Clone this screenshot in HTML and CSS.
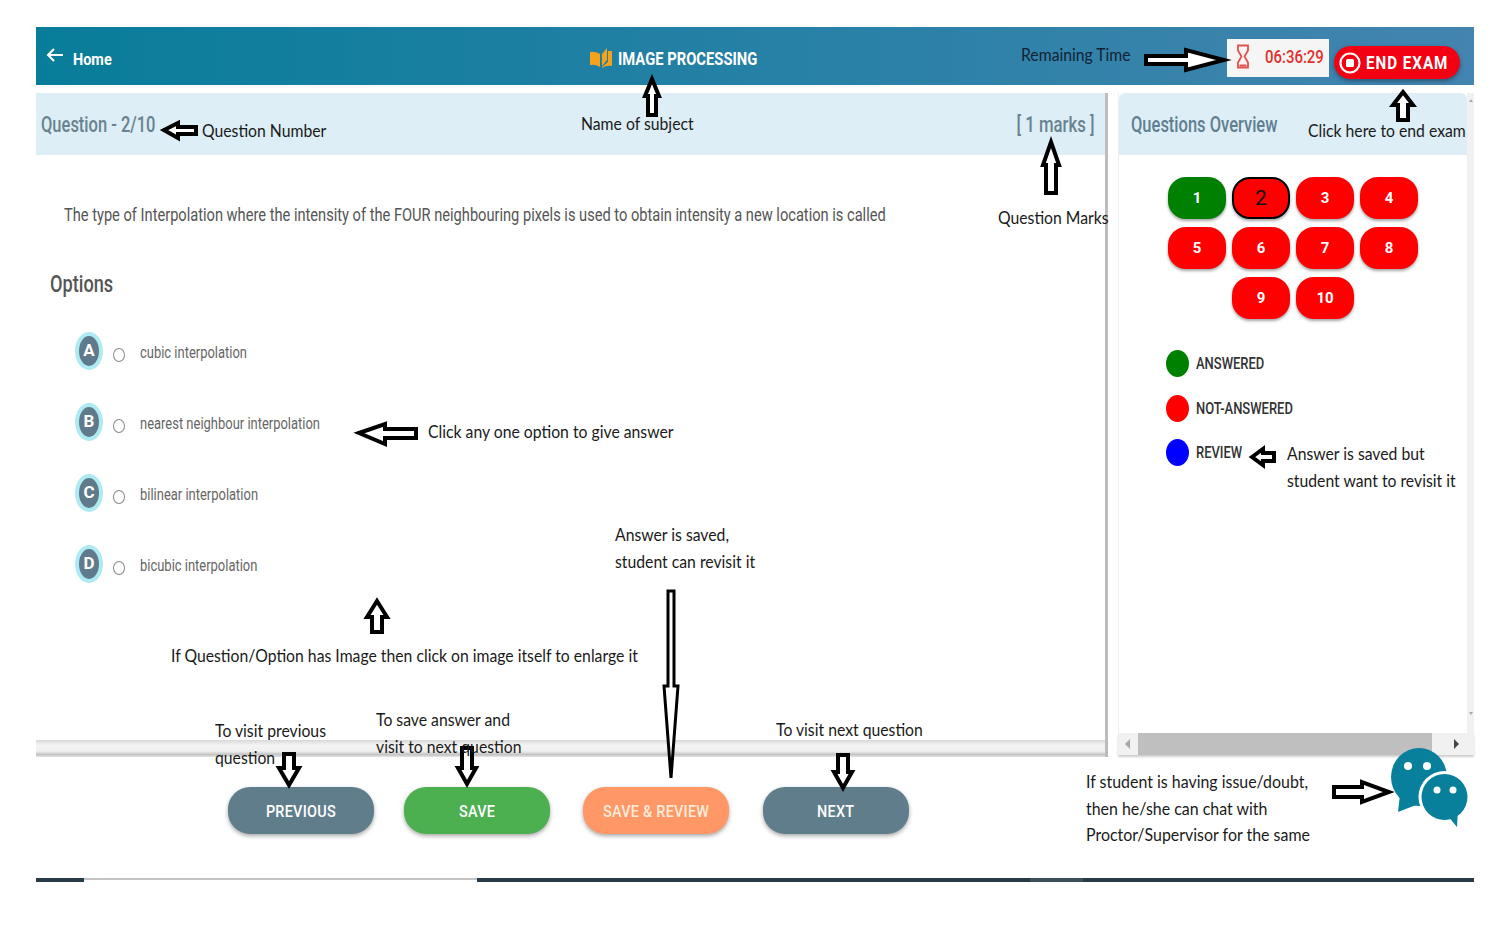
FILE: index.html
```html
<!DOCTYPE html>
<html lang="en">
<head>
    <meta charset="UTF-8">
    <meta name="viewport" content="width=device-width, initial-scale=1.0">
    <title>Online Exam Instructions</title>
    <link rel="stylesheet" href="styles.css">
</head>
<body>
    <div class="exam">
        <header class="topbar">
            <a class="home" href="#">
                <svg width="18" height="14" viewBox="0 0 18 14"><path d="M17 7H2M8 1 2 7l6 6" fill="none" stroke="#fff" stroke-width="2"/></svg>
                <span>Home</span>
            </a>
            <div class="subject">
                <svg width="22" height="22" viewBox="0 0 22 22"><path d="M0 5q5-1 10 2v13q-5-3-10-2zM12 7l5-6v12l-5 6z" fill="#f7a21b"/><path d="M18 4h4v15q-6-1-10 2v-1l6-5z" fill="#f7a21b"/></svg>
                <span>IMAGE PROCESSING</span>
            </div>
            <div class="timer">
                <svg width="14" height="25" viewBox="0 0 14 25"><path d="M2 1.500h10v5L8.500 12.500 12 18.500v5H2v-5l3.500-6L2 6.500z" fill="none" stroke="#e2514c" stroke-width="1.800"/><path d="M3.500 20.500h7v2h-7z" fill="#e2514c"/></svg>
                <span>06:36:29</span>
            </div>
            <button class="end-exam">
                <svg width="24" height="24" viewBox="0 0 24 24"><circle cx="12" cy="12" r="9.500" fill="none" stroke="#fff" stroke-width="2.200"/><rect x="8" y="8" width="8" height="8" rx="1.500" fill="#fff"/></svg>
                <span>END EXAM</span>
            </button>
        </header>

        <div class="panes">
            <section class="question-pane">
                <div class="q-head">
                    <span class="q-number">Question - 2/10</span>
                    <span class="q-marks">[ 1 marks ]</span>
                </div>
                <p class="q-text">The type of Interpolation where the intensity of the FOUR neighbouring pixels is used to obtain intensity a new location is called</p>
                <h3 class="options-title">Options</h3>
                <div class="options">
                    <label class="option"><span class="badge">A</span><span class="radio"></span><span class="option-text">cubic interpolation</span></label>
                    <label class="option"><span class="badge">B</span><span class="radio"></span><span class="option-text">nearest neighbour interpolation</span></label>
                    <label class="option"><span class="badge">C</span><span class="radio"></span><span class="option-text">bilinear interpolation</span></label>
                    <label class="option"><span class="badge">D</span><span class="radio"></span><span class="option-text">bicubic interpolation</span></label>
                </div>
                <div class="pane-bar"></div>
            </section>

            <aside class="overview">
                <div class="overview-body">
                    <div class="overview-main">
                        <div class="overview-head"><span>Questions Overview</span></div>
                        <div class="numbers">
                            <button class="num answered">1</button>
                            <button class="num current">2</button>
                            <button class="num">3</button>
                            <button class="num">4</button>
                            <button class="num">5</button>
                            <button class="num">6</button>
                            <button class="num">7</button>
                            <button class="num">8</button>
                            <button class="num">9</button>
                            <button class="num">10</button>
                        </div>
                        <ul class="legend">
                            <li><span class="dot green"></span><span class="legend-text">ANSWERED</span></li>
                            <li><span class="dot red"></span><span class="legend-text">NOT-ANSWERED</span></li>
                            <li><span class="dot blue"></span><span class="legend-text">REVIEW</span></li>
                        </ul>
                    </div>
                    <div class="v-scroll">
                        <span class="tri-up"></span>
                        <span class="tri-down"></span>
                    </div>
                </div>
                <div class="h-scroll">
                    <span class="tri tri-left"></span>
                    <span class="thumb"></span>
                    <span class="tri tri-right"></span>
                </div>
            </aside>
        </div>

        <div class="actions">
            <button class="action slate"><span>PREVIOUS</span></button>
            <button class="action green-btn"><span>SAVE</span></button>
            <button class="action orange"><span>SAVE &amp; REVIEW</span></button>
            <button class="action slate"><span>NEXT</span></button>
        </div>

        <div class="progress">
            <span class="seg-dark seg-start"></span>
            <span class="seg-light"></span>
            <span class="seg-dark seg-mid"></span>
            <span class="seg-soft"></span>
            <span class="seg-dark seg-end"></span>
        </div>
    </div>

    <!-- annotations drawn over the screenshot -->
    <svg class="arrows" width="1501" height="928" viewBox="0 0 1501 928">
        <g fill="#fff" stroke="#000" stroke-width="4">
            <path d="M652 79l7 17h-3v19h-8V96h-3z"/>
            <path d="M164 130l14-7v4h18v7h-18v4z"/>
            <path d="M1146 56h40v-6l38 10-38 10v-6h-40z"/>
            <path d="M1403 92l10 13h-5v15h-10v-15h-5z"/>
            <path d="M1051 142l8 23h-3v28h-10v-28h-3z"/>
            <path d="M359 433l26-9v5h31v9h-31v6z"/>
            <path d="M1252 457l11-8v4h11v8h-11v4z"/>
            <path d="M377 601l10 16h-5v15h-10v-15h-5z"/>
            <path d="M284 754h10v14h5l-10 17-10-17h5z"/>
            <path d="M462 748h10v20h4l-9 16-9-16h4z"/>
            <path d="M838 755h10v17h4l-9 16-9-16h4z"/>
            <path d="M1334 787h28v-5l27 10-27 10v-5h-28z"/>
        </g>
        <path d="M668 591h6v95h4l-7 92-7-92h4z" fill="#fff" stroke="#000" stroke-width="3"/>
        <g fill="#08809c">
            <ellipse cx="1419" cy="777" rx="28" ry="29"/>
            <path d="M1400 795l-2 17 18-7z"/>
            <circle cx="1444.500" cy="797" r="26" fill="#fff"/>
            <circle cx="1444.500" cy="797" r="23"/>
            <path d="M1447 815l10 12 1-18z"/>
        </g>
        <g fill="#fff">
            <circle cx="1408" cy="766" r="4"/>
            <circle cx="1427" cy="766" r="4"/>
            <circle cx="1437" cy="790" r="3.500"/>
            <circle cx="1453" cy="790" r="3.500"/>
        </g>
    </svg>

    <p class="note note-number">Question Number</p>
    <p class="note note-subject">Name of subject</p>
    <p class="note note-marks">Question Marks</p>
    <p class="note note-time">Remaining Time</p>
    <p class="note note-end">Click here to end exam</p>
    <p class="note note-click">Click any one option to give answer</p>
    <p class="note note-saved">Answer is saved,<br>student can revisit it</p>
    <p class="note note-image">If Question/Option has Image then click on image itself to enlarge it</p>
    <p class="note note-prev">To visit previous<br>question</p>
    <p class="note note-save">To save answer and<br>visit to next question</p>
    <p class="note note-next">To visit next question</p>
    <p class="note note-review">Answer is saved but<br>student want to revisit it</p>
    <p class="note note-chat">If student is having issue/doubt,<br>then he/she can chat with<br>Proctor/Supervisor for the same</p>
</body>
</html>
```

FILE: styles.css
```css
* {
    box-sizing: border-box;
}
body {
    margin: 0;
    position: relative;
    height: 928px;
    overflow: hidden;
    background: #fff;
    font-family: Roboto, "Liberation Sans", sans-serif;
}
button {
    font-family: inherit;
    border: none;
    cursor: pointer;
}
.exam {
    width: 1438px;
    margin-left: 36px;
    padding-top: 27px;
}

/* top bar */
.topbar {
    height: 58px;
    display: flex;
    align-items: center;
    background: linear-gradient(90deg, #087d9a, #4384b0);
    color: #fff;
}
.home {
    display: flex;
    align-items: center;
    gap: 9px;
    width: 554px;
    margin-top: 6px;
    padding-left: 10px;
    color: #fff;
    font-size: 17px;
    font-weight: 700;
    text-decoration: none;
}
.home svg {
    margin-top: -8px;
}
.home span {
    transform: scaleX(.85);
    transform-origin: left center;
}
.subject {
    display: flex;
    align-items: center;
    gap: 6px;
    width: 637px;
    margin-top: 4px;
    font-size: 18px;
    font-weight: 700;
}
.subject span {
    transform: scaleX(.82);
    transform-origin: left center;
    white-space: nowrap;
}
.timer {
    display: flex;
    align-items: center;
    gap: 15px;
    width: 102px;
    height: 38px;
    margin-top: 4px;
    padding-left: 9px;
    background: #f5f5f5;
    color: #e2302c;
    font-size: 18px;
    font-weight: 500;
}
.timer svg {
    flex: none;
    margin-top: -3px;
}
.timer span {
    transform: scaleX(.83);
    transform-origin: left center;
    margin-top: -3px;
}
.end-exam {
    display: flex;
    align-items: center;
    gap: 4px;
    width: 126px;
    height: 33px;
    margin: 13px 0 0 5px;
    padding: 0 0 0 4px;
    border-radius: 17px;
    background: #f30012;
    box-shadow: 0 2px 4px rgba(0, 0, 0, .35);
    color: #fff;
    font-size: 19px;
    font-weight: 700;
    letter-spacing: 1.2px;
}
.end-exam svg {
    flex: none;
}
.end-exam span {
    transform: scaleX(.8);
    transform-origin: left center;
    white-space: nowrap;
}

/* panes */
.panes {
    display: flex;
    gap: 10px;
    height: 664px;
    margin-top: 8px;
}
.question-pane {
    width: 1072px;
    display: flex;
    flex-direction: column;
    border-right: 3px solid #bdbdbd;
}
.q-head {
    height: 62px;
    display: flex;
    justify-content: space-between;
    align-items: center;
    padding: 0 11px 0 5px;
    background: #ddeef6;
    color: #68838f;
    font-size: 22px;
    font-weight: 500;
}
.q-number {
    transform: scaleX(.75);
    transform-origin: left center;
}
.q-marks {
    transform: scaleX(.76);
    transform-origin: right center;
}
.q-text {
    margin: 50px 0 0 28px;
    height: 20px;
    color: #555;
    font-size: 18px;
    line-height: 20px;
    white-space: nowrap;
    transform: scaleX(.813);
    transform-origin: left center;
}
.options-title {
    margin: 47px 0 0 14px;
    color: #555;
    font-size: 23px;
    font-weight: 500;
    line-height: 26px;
    transform: scaleX(.79);
    transform-origin: left center;
}
.options {
    display: flex;
    flex-direction: column;
    gap: 33px;
    margin: 34px 0 0 39px;
}
.option {
    display: flex;
    align-items: center;
    height: 38px;
    cursor: pointer;
}
.badge {
    width: 28px;
    height: 38px;
    display: flex;
    align-items: center;
    justify-content: center;
    border: 4px solid #aeeaf2;
    border-radius: 50%;
    background: #5f7a8a;
    color: #fff;
    font-size: 17px;
    font-weight: 700;
    padding-bottom: 2px;
}
.radio {
    width: 12px;
    height: 14px;
    margin: 8px 15px 0 10px;
    border: 1px solid #8a8a8a;
    border-radius: 50%;
}
.option-text {
    margin-top: 2px;
    color: #666;
    font-size: 16px;
    white-space: nowrap;
    transform: scaleX(.81);
    transform-origin: left center;
}
.pane-bar {
    height: 17px;
    margin-top: auto;
    background: linear-gradient(#d8d8d8, #f4f4f4 30%, #f0f0f0 65%, #c4c4c4 85%, #e4e4e4);
}

/* right side */
.overview {
    width: 356px;
    display: flex;
    flex-direction: column;
}
.overview-body {
    flex: 1;
    display: flex;
    background: #fff;
}
.overview-main {
    flex: 1;
    border-left: 1px solid #eee;
}
.overview-head {
    height: 62px;
    display: flex;
    align-items: center;
    padding-left: 12px;
    border-radius: 6px 6px 0 0;
    background: #ddeef6;
    color: #5f7f91;
    font-size: 22px;
    font-weight: 500;
}
.overview-head span {
    transform: scaleX(.75);
    transform-origin: left center;
    white-space: nowrap;
}
.v-scroll {
    width: 7px;
    display: flex;
    flex-direction: column;
    justify-content: space-between;
    padding: 6px 0 40px;
    background: #f1f1f1;
}
.tri-up, .tri-down {
    width: 0;
    height: 0;
    margin-left: 2px;
    border-left: 2px solid transparent;
    border-right: 2px solid transparent;
}
.tri-up { border-bottom: 3px solid #aaa; }
.tri-down { border-top: 3px solid #aaa; }
.numbers {
    width: 250px;
    display: flex;
    flex-wrap: wrap;
    justify-content: center;
    gap: 8px 6px;
    margin: 22px 0 0 49px;
}
.num {
    width: 58px;
    height: 42px;
    padding: 0;
    border-radius: 18px;
    background: #f00;
    box-shadow: 0 2px 3px rgba(0, 0, 0, .35);
    color: #fff;
    font-size: 15px;
    font-weight: 700;
}
.num.answered {
    background: #008000;
}
.num.current {
    border: 2px solid #000;
    color: #111;
    font-size: 21px;
    font-weight: 400;
}
.legend {
    list-style: none;
    margin: 31px 0 0 47px;
    padding: 0;
    display: flex;
    flex-direction: column;
    gap: 17.500px;
}
.legend li {
    display: flex;
    align-items: center;
    gap: 7px;
    color: #333;
    font-size: 16px;
    font-weight: 500;
}
.legend-text {
    transform: scaleX(.81);
    transform-origin: left center;
    white-space: nowrap;
}
.dot {
    width: 23px;
    height: 27px;
    border-radius: 50%;
}
.dot.green { background: #008000; }
.dot.red { background: #f00; }
.dot.blue { background: #00f; }
.h-scroll {
    height: 22px;
    display: flex;
    align-items: center;
    margin: -22px 0 2px;
    position: relative;
    background: #f1f1f1;
    box-shadow: 0 2px 2px rgba(0, 0, 0, .2);
}
.thumb {
    width: 294px;
    height: 22px;
    background: #bfbfbf;
}
.tri {
    width: 0;
    height: 0;
    border-top: 5px solid transparent;
    border-bottom: 5px solid transparent;
}
.tri-left {
    margin: 0 8px 0 7px;
    border-right: 5px solid #a5a5a5;
}
.tri-right {
    margin-left: 22px;
    border-left: 5px solid #444;
}

/* bottom buttons */
.actions {
    display: flex;
    gap: 33px;
    margin-top: 30px;
    padding-left: 192px;
}
.action {
    width: 146px;
    height: 47px;
    padding-top: 2px;
    border-radius: 22px;
    box-shadow: 0 2px 4px rgba(0, 0, 0, .35);
    color: #fff;
    font-size: 16px;
    font-weight: 500;
    letter-spacing: .3px;
}
.action span {
    display: inline-block;
    transform: scaleX(.9);
}
.slate { background: #607d8b; }
.green-btn { background: #4caf50; margin-left: -3px; }
.orange { background: #ff9866; color: #fdebd9; }
.orange + .slate { margin-left: 1px; }
.progress {
    display: flex;
    align-items: flex-start;
    height: 4px;
    margin-top: 44px;
}
.seg-dark {
    height: 4px;
    background: #263a47;
}
.seg-start { width: 48px; }
.seg-light { width: 393px; height: 2px; background: #c4c4c4; }
.seg-mid { width: 553px; }
.seg-soft { width: 53px; height: 4px; background: #3d4f5b; }
.seg-end { flex: 1; }

/* annotations */
.arrows {
    position: absolute;
    left: 0;
    top: 0;
    pointer-events: none;
}
.note {
    position: absolute;
    margin: 0;
    color: #1a1a1a;
    font-family: Lato, "Liberation Sans", sans-serif;
    font-size: 18px;
    line-height: 26.500px;
    white-space: nowrap;
    transform: scaleX(.875);
    transform-origin: left top;
}
.note-number { left: 202px; top: 117px; }
.note-subject { left: 581px; top: 110px; }
.note-marks { left: 998px; top: 204px; }
.note-time { left: 1021px; top: 41px; color: #123; }
.note-end { left: 1308px; top: 117px; }
.note-click { left: 428px; top: 418px; }
.note-saved { left: 615px; top: 521px; }
.note-image { left: 171px; top: 642px; }
.note-prev { left: 215px; top: 717px; }
.note-save { left: 376px; top: 706px; }
.note-next { left: 776px; top: 716px; }
.note-review { left: 1287px; top: 440px; }
.note-chat { left: 1086px; top: 768px; transform: scaleX(.885); }
```
